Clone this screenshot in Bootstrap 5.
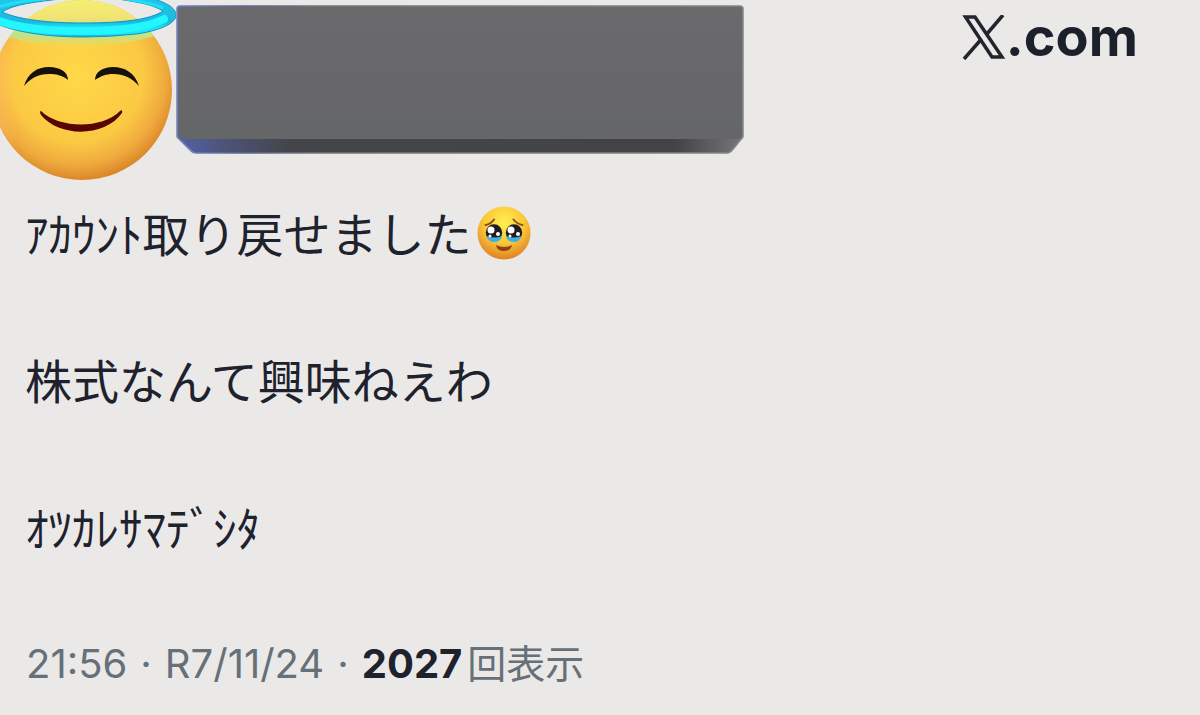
<!DOCTYPE html>
<html lang="ja">
<head>
<meta charset="utf-8">
<meta name="viewport" content="width=device-width, initial-scale=1">
<title>ポスト</title>
<link href="https://cdn.jsdelivr.net/npm/bootstrap@5.3.0/dist/css/bootstrap.min.css" rel="stylesheet">
<style>
  body { background: #ebe9e8; color: #1e222d; font-family: Inter, "Noto Sans CJK JP", sans-serif; overflow-x: hidden; }
  .avatar-art { width: 176px; height: 182px; }
  .name-cover { width: 568px; height: 150px; margin-top: 5px; }
  .site-name { color: #1c202b; font: 700 54px/64px Inter, sans-serif; margin: 5px 62px 0 0; }
  .site-name:hover { color: #1c202b; }
  .x-logo { width: 44px; height: 45px; }
  .post-text { font-family: "Noto Sans CJK JP", sans-serif; font-size: 47px; line-height: 73px; padding: 13px 25px 0; gap: 74px; }
  .post-emoji { width: 56px; height: 56px; margin: 3px 0 0 4px; }
  .post-meta { color: #667078; font-size: 40px; line-height: 56px; padding: 0 26px; margin-top: 74px; gap: 13px; }
  .view-count { color: #1e222d; font-weight: 700; }
  .view-label { font-size: 39px; margin-left: -8px; }
</style>
</head>
<body>
<article>
  <header class="d-flex align-items-start">
    <svg class="avatar-art flex-shrink-0" viewBox="0 0 176 182" role="img" aria-label="天使の笑顔">
      <defs>
        <radialGradient id="face" cx=".47" cy=".42" r=".62">
          <stop offset="0" stop-color="#ffd848"/><stop offset=".6" stop-color="#fbc943"/>
          <stop offset=".8" stop-color="#efaa3e"/><stop offset="1" stop-color="#d2761c"/>
        </radialGradient>
        <linearGradient id="shine" x2="0" y2="1">
          <stop offset="0" stop-color="#f4ef74"/><stop offset=".35" stop-color="#f2e372"/>
          <stop offset=".55" stop-color="#c3e487"/><stop offset=".72" stop-color="#bfe389"/><stop offset="1" stop-color="#fbdc50" stop-opacity="0"/>
        </linearGradient>
        <linearGradient id="edge" x2="1" y2="0">
          <stop offset="0" stop-color="#ffbf68" stop-opacity=".6"/><stop offset=".14" stop-color="#ffc15c" stop-opacity="0"/>
        </linearGradient>
        <linearGradient id="halo" gradientUnits="userSpaceOnUse" x1="0" y1="0" x2="0" y2="37">
          <stop offset="0" stop-color="#1fc6ea"/><stop offset=".6" stop-color="#1bb9e0"/>
          <stop offset=".75" stop-color="#1de4f6"/><stop offset=".92" stop-color="#19e5f5"/><stop offset="1" stop-color="#159ccb"/>
        </linearGradient>
        <clipPath id="face-clip"><circle cx="82" cy="90" r="90"/></clipPath>
      </defs>
      <circle cx="82" cy="90" r="90" fill="url(#face)"/>
      <circle cx="82" cy="90" r="90" fill="url(#edge)"/>
      <path d="M0 0H176V30Q140 42 82 50Q24 44 0 34Z" fill="url(#shine)" clip-path="url(#face-clip)"/>
      <path fill="url(#halo)" stroke="#1593c2" stroke-width="1" fill-rule="evenodd" d="M-10 -2H150C166 2 176 8 176 15C176 24 158 31 136 34Q110 37 83 37C50 37 14 33 -10 21ZM2 12C20 20 50 23 83 23C120 23 150 20 163 11C152 4 136 2 118 -1H60C36 2 14 4 2 12Z"/>
      <path d="M-4 20C18 28 50 31 83 31C120 31 146 28 164 19" fill="none" stroke="#23f6ff" stroke-width="8" stroke-linecap="round"/>
      <path d="M-2 7Q18 1 46 -1M126 -1Q148 2 163 8" fill="none" stroke="#22def4" stroke-width="3"/>
      <path d="M24 86C28 73 37 67 49 67C60 67 68 72 68 80C62 75 56 74 49 74C38 74 31 78 24 86ZM139 86C135 73 125 67 113 67C103 67 95 72 95 80C101 76 106 74 113 74C124 74 132 78 139 86Z" fill="#16110c"/>
      <path d="M41 111C60 129 102 129 120 111Q123 109 122 113C105 137 60 138 41 115Q39 111 41 111Z" fill="#580604"/>
    </svg>
    <svg class="name-cover flex-shrink-1" viewBox="0 0 568 150" preserveAspectRatio="none" aria-hidden="true">
      <defs>
        <linearGradient id="slab" x2="0" y2="1"><stop offset="0" stop-color="#6a6a6d"/><stop offset=".5" stop-color="#68686a"/><stop offset="1" stop-color="#656668"/></linearGradient>
        <linearGradient id="under"><stop offset="0" stop-color="#5362a8"/><stop offset=".08" stop-color="#4d547a"/><stop offset=".2" stop-color="#434549"/><stop offset=".88" stop-color="#434345"/><stop offset="1" stop-color="#77777a"/></linearGradient>
        <linearGradient id="rim"><stop offset="0" stop-color="#7181c6"/><stop offset=".12" stop-color="#5d6691"/><stop offset=".25" stop-color="#757577"/><stop offset="1" stop-color="#858587"/></linearGradient>
      </defs>
      <path d="M1 132L16 146Q18 148 21 148H551Q555 148 558 144L567 132Z" fill="url(#under)"/>
      <path d="M4 1H564Q567 1 567 4V131L564 134H4L1 131V4Q1 1 4 1Z" fill="url(#slab)"/>
      <path d="M4 1H564Q567 1 567 4V132L556 145Q554 148 550 148H20Q17 148 15 146L1 132V4Q1 1 4 1Z" fill="none" stroke="url(#rim)" stroke-width="1.500"/>
    </svg>
    <a class="site-name ms-auto d-flex align-items-center text-decoration-none" href="#" aria-label="X.com">
      <svg class="x-logo" viewBox="0 0 44 45" fill="none" stroke="#22252d" stroke-width="3.500" aria-hidden="true">
        <path d="M3.500 2H13L40 42H30Z"/>
        <path d="M41 0L24 20M19.500 24L2 44"/>
      </svg><span>.com</span>
    </a>
  </header>
  <div class="post-text d-flex flex-column">
    <p class="mb-0 d-flex align-items-center">ｱｶｳﾝﾄ取り戻せました
      <svg class="post-emoji" viewBox="0 0 56 56" role="img" aria-label="涙をこらえる顔">
        <defs>
          <radialGradient id="tearface" cx=".5" cy=".3" r=".7"><stop offset="0" stop-color="#fff052"/><stop offset=".55" stop-color="#fbc737"/><stop offset="1" stop-color="#dd8125"/></radialGradient>
        </defs>
        <circle cx="28" cy="28" r="26.500" fill="url(#tearface)"/>
        <path d="M9.500 20Q15 19 18 14.500M37.500 14.500Q41 19 46.500 20" fill="none" stroke="#8b5217" stroke-width="2" stroke-linecap="round"/>
        <circle cx="18" cy="27.500" r="8.200" fill="#201d22"/><circle cx="38" cy="27.500" r="8.200" fill="#201d22"/>
        <path d="M11 31Q18 34 26 31Q25 37 18 37Q12 37 11 31ZM30 31Q38 34 45 31Q44 37 38 37Q31 37 30 31Z" fill="#38b3e5"/>
        <g fill="#fff"><circle cx="15" cy="25" r="3.500"/><circle cx="22" cy="29" r="2"/><circle cx="35" cy="25" r="3.500"/><circle cx="42" cy="29" r="2"/><circle cx="14" cy="31" r="1.500"/><circle cx="34" cy="31" r="1.500"/></g>
        <path d="M20 40Q28 44 36 40Q35 46 28 46Q21 46 20 40Z" fill="#8c4215"/>
      </svg>
    </p>
    <p class="mb-0">株式なんて興味ねえわ</p>
    <p class="mb-0">ｵﾂｶﾚｻﾏﾃﾞｼﾀ</p>
  </div>
  <footer class="post-meta d-flex align-items-baseline"><time>21:56</time><span>·</span><time>R7/11/24</time><span>·</span><span class="view-count">2027</span><span class="view-label">回表示</span></footer>
</article>
<script src="https://cdn.jsdelivr.net/npm/bootstrap@5.3.0/dist/js/bootstrap.bundle.min.js"></script>
</body>
</html>
